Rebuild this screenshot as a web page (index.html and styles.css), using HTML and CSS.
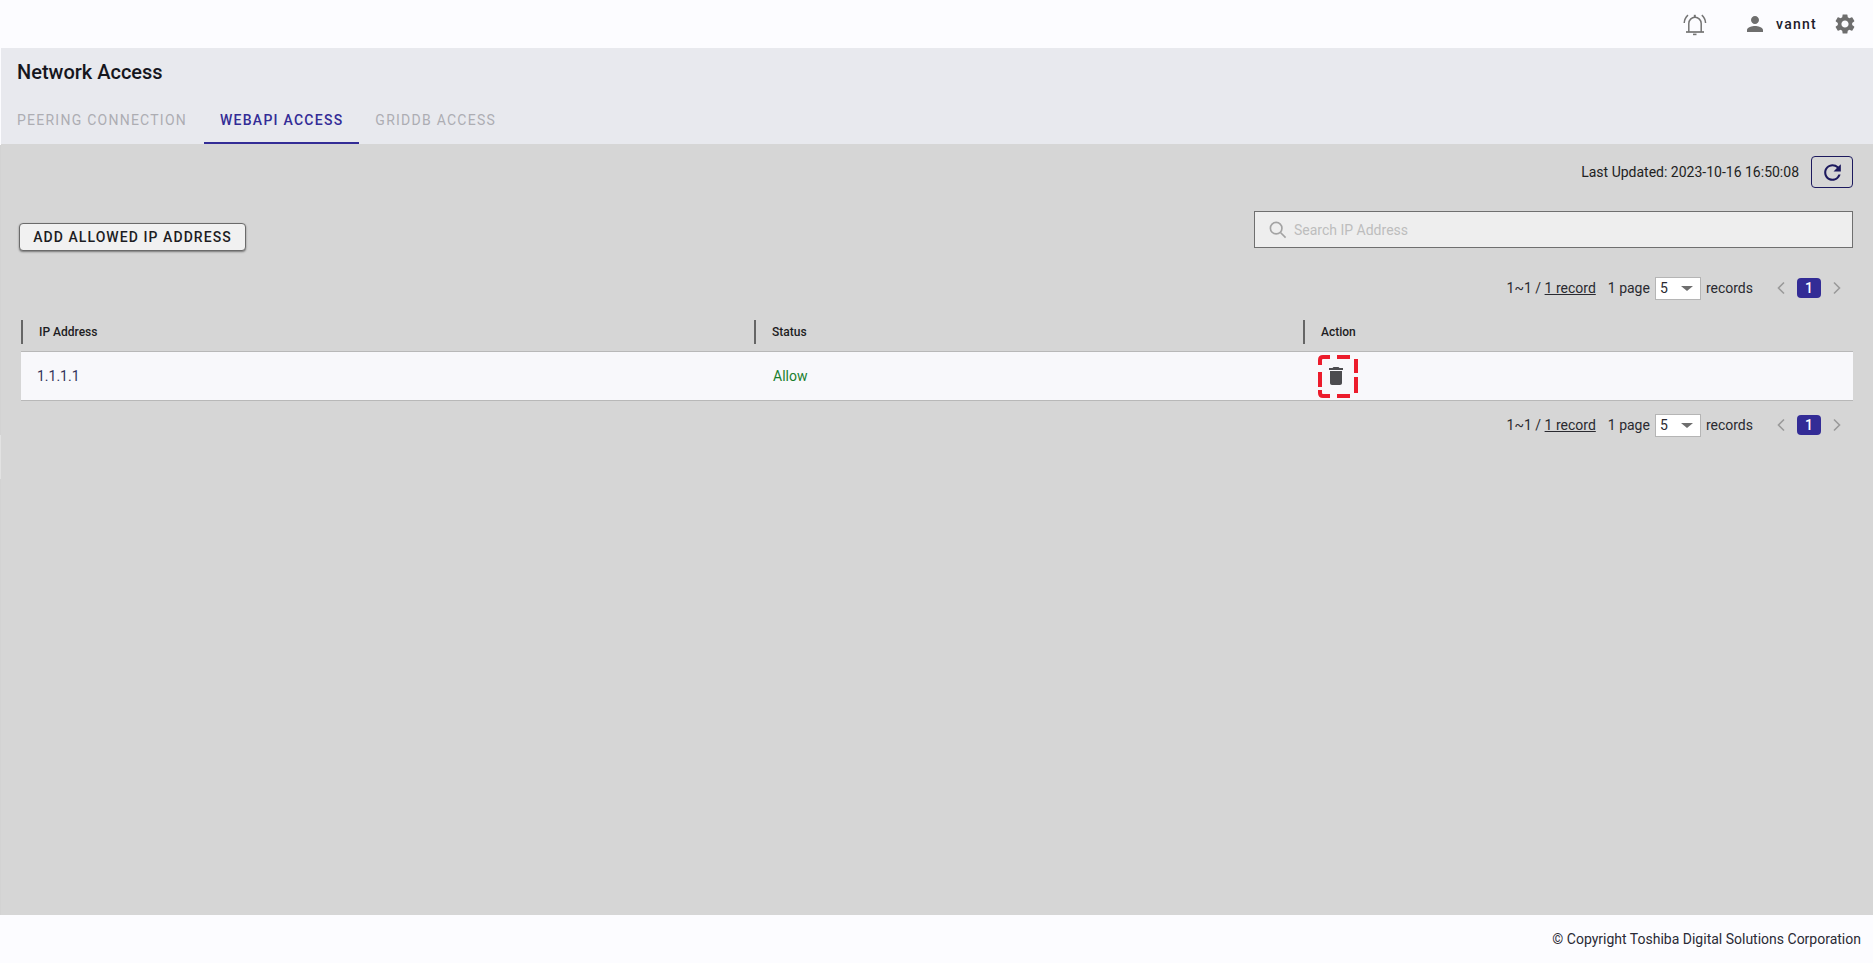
FILE: index.html
```html
<!DOCTYPE html>
<html lang="en">
<head>
<meta charset="utf-8">
<title>Network Access</title>
<link rel="stylesheet" href="styles.css">
</head>
<body>
<div class="app">
  <header class="topbar">
    <svg class="bell" viewBox="0 0 24 24" width="24" height="24" fill="none" stroke="#747474" stroke-width="1.500"><path d="M3 20h18" stroke-width="1.700"/><path d="M5.800 20v-8.500a6.200 6.200 0 0 1 12.400 0V20"/><path d="M10 22.400h3.500" stroke-width="1.600"/><path d="M11.800 2.800v2.400" stroke-width="2"/><path d="M1.200 11C1.400 8 2.600 5.200 5 3.200M22.600 11c-.2-3-1.400-5.800-3.800-7.800"/></svg>
    <svg class="user" viewBox="0 0 24 24" width="24" height="24" fill="#6e6e6e"><path d="M12 12c2.200 0 4-1.800 4-4s-1.800-4-4-4-4 1.800-4 4 1.800 4 4 4zm0 2c-2.700 0-8 1.300-8 4v2h16v-2c0-2.700-5.300-4-8-4z"/></svg>
    <span class="username">vannt</span>
    <svg class="gear" viewBox="0 0 24 24" width="24" height="24" fill="#6e6e6e"><path d="M19.140 12.940c.04-.3.060-.61.060-.94 0-.32-.02-.64-.07-.94l2.030-1.580a.49.49 0 0 0 .12-.61l-1.920-3.320a.488.488 0 0 0-.59-.22l-2.390.96c-.5-.38-1.030-.7-1.620-.94l-.36-2.540a.484.484 0 0 0-.48-.41h-3.840c-.24 0-.43.170-.47.410l-.36 2.540c-.59.24-1.130.57-1.620.94l-2.390-.96c-.22-.08-.47 0-.59.220L2.740 8.870c-.12.210-.08.470.120.610l2.030 1.580c-.05.300-.09.630-.09.940s.02.640.07.940l-2.030 1.580a.49.49 0 0 0-.12.610l1.920 3.320c.12.220.37.290.59.220l2.390-.96c.5.380 1.030.7 1.620.94l.36 2.540c.05.240.24.410.48.410h3.840c.24 0 .44-.170.47-.410l.36-2.540c.59-.24 1.130-.56 1.620-.94l2.390.96c.22.080.47 0 .59-.220l1.920-3.320c.12-.22.070-.47-.12-.61l-2.010-1.580zM12 15.600c-1.980 0-3.600-1.620-3.600-3.600s1.620-3.600 3.600-3.600 3.600 1.620 3.600 3.600-1.620 3.600-3.600 3.600z"/></svg>
  </header>

  <section class="page-head">
    <h1 class="page-title">Network Access</h1>
    <nav class="tabs">
      <a class="tab tab-first">PEERING CONNECTION</a>
      <a class="tab tab-active">WEBAPI ACCESS</a>
      <a class="tab">GRIDDB ACCESS</a>
    </nav>
  </section>

  <main class="content">
    <div class="update-row">
      <span class="updated">Last Updated: 2023-10-16 16:50:08</span>
      <button class="refresh" type="button" aria-label="Refresh">
        <svg viewBox="0 0 24 24" width="25" height="25" fill="#1d1a5e"><path d="M17.650 6.350A7.958 7.958 0 0 0 12 4c-4.420 0-7.990 3.580-7.990 8s3.570 8 7.990 8c3.730 0 6.840-2.550 7.730-6h-2.080A5.990 5.990 0 0 1 12 18c-3.310 0-6-2.690-6-6s2.690-6 6-6c1.660 0 3.140.69 4.220 1.780L13 11h7V4l-2.350 2.350z"/></svg>
      </button>
    </div>

    <div class="action-row">
      <button class="add-btn" type="button">ADD ALLOWED IP ADDRESS</button>
      <label class="search">
        <svg viewBox="0 0 24 24" width="22" height="22" fill="none" stroke="#a3a3a3" stroke-width="1.800"><circle cx="10" cy="10" r="6.300"/><path d="M14.700 14.700l5.600 5.600"/></svg>
        <span class="placeholder">Search IP Address</span>
      </label>
    </div>

    <div class="pager pager-top">
      <span>1~1 / <u>1 record</u></span>
      <span class="per-page">1 page</span>
      <span class="select">5<i class="caret"></i></span>
      <span>records</span>
      <svg class="chev" viewBox="0 0 10 14" width="10" height="14" fill="none" stroke="#9a9a9a" stroke-width="1.600"><path d="M8 1.500L2.500 7 8 12.500"/></svg>
      <span class="page-num">1</span>
      <svg class="chev" viewBox="0 0 10 14" width="10" height="14" fill="none" stroke="#9a9a9a" stroke-width="1.600"><path d="M2 1.500L7.500 7 2 12.500"/></svg>
    </div>

    <div class="table">
      <div class="thead">
        <div class="th col-ip">IP Address</div>
        <div class="th col-status">Status</div>
        <div class="th col-action">Action</div>
      </div>
      <div class="trow">
        <div class="td col-ip ip-val">1.1.1.1</div>
        <div class="td col-status allow">Allow</div>
        <div class="td col-action">
          <span class="del-wrap">
            <svg viewBox="0 0 24 24" width="24" height="24" fill="#4c4c4f"><path d="M6 19c0 1.100.9 2 2 2h8c1.100 0 2-.9 2-2V7H6v12zM19 4h-3.500l-1-1h-5l-1 1H5v2h14V4z"/></svg>
            <svg class="del-mark" viewBox="0 0 40 43" width="40" height="43" fill="none" stroke="#ec1c2c" stroke-width="4"><path d="M2 10V5Q2 2 5 2H12M19 2H32M38 4V18M38 22V38M32 41H19M12 41H5Q2 41 2 38V35M2 32V17"/></svg>
          </span>
        </div>
      </div>
    </div>

    <div class="pager pager-bottom">
      <span>1~1 / <u>1 record</u></span>
      <span class="per-page">1 page</span>
      <span class="select">5<i class="caret"></i></span>
      <span>records</span>
      <svg class="chev" viewBox="0 0 10 14" width="10" height="14" fill="none" stroke="#9a9a9a" stroke-width="1.600"><path d="M8 1.500L2.500 7 8 12.500"/></svg>
      <span class="page-num">1</span>
      <svg class="chev" viewBox="0 0 10 14" width="10" height="14" fill="none" stroke="#9a9a9a" stroke-width="1.600"><path d="M2 1.500L7.500 7 2 12.500"/></svg>
    </div>
  </main>

  <footer class="footer">© Copyright Toshiba Digital Solutions Corporation</footer>
</div>
</body>
</html>
```
FILE: styles.css
```css
* { box-sizing: border-box; }
html, body { margin: 0; height: 100%; }
body { font-family: Roboto, "Liberation Sans", sans-serif; color: #222; background: #fcfcff; overflow: hidden; }
.app { display: flex; flex-direction: column; height: 963px; }

.topbar { height: 48px; background: #fcfcff; display: flex; align-items: center; justify-content: flex-end; padding-right: 16px; flex: none; }
.bell { margin-right: 36px; }
.user { margin-right: 9px; }
.username { font-size: 14px; font-weight: 500; letter-spacing: 1.250px; color: #1d1d2b; margin-right: 16px; }

.page-head { height: 97px; background: #e8e9ee; margin-left: 1px; flex: none; display: flex; flex-direction: column; border-bottom: 1px solid #d6d6d6; }
.page-title { margin: 9px 0 0 16px; font-size: 20px; line-height: 30px; font-weight: 500; color: #16161d; }
.tabs { display: flex; margin-top: auto; }
.tab { padding: 2px 16px 0; height: 48px; display: flex; align-items: center; font-size: 14px; font-weight: 400; letter-spacing: 1.250px; color: #adadb3; border-bottom: 2px solid transparent; }
.tab-first { padding-right: 17px; }
.tab-active { color: #332c96; font-weight: 500; border-bottom-color: #332c96; }

.content { position: relative; flex: 1; background: #d6d6d6; border-left: 1px solid #d3d3d3; padding: 11px 20px 0 18px; display: flex; flex-direction: column; }
.content::before { content: ""; position: absolute; left: -1px; top: 290px; width: 1px; height: 44px; background: #e2e2e2; }

.update-row { display: flex; justify-content: flex-end; align-items: center; height: 32px; }
.updated { font-size: 14px; color: #222; margin-right: 12px; }
.refresh { width: 42px; height: 32px; border: 1px solid #1d1a5e; border-radius: 4px; background: transparent; padding: 0; display: flex; align-items: center; justify-content: center; }

.action-row { display: flex; justify-content: space-between; align-items: flex-start; margin-top: 23px; height: 37px; }
.add-btn { margin-top: 12px; width: 227px; height: 28px; border: 1px solid #6b6b6b; border-radius: 4px; background: #f1f1f1; box-shadow: 0 1px 2px rgba(0,0,0,.45); font-family: inherit; font-size: 14px; font-weight: 500; letter-spacing: 1.070px; color: #1d1d23; padding: 0; }
.search { width: 599px; height: 37px; border: 1px solid #6f6f6f; background: #eeeeee; display: flex; align-items: center; padding-left: 12px; }
.placeholder { font-size: 14px; color: #bdbdbd; margin-left: 5px; }

.pager { display: flex; justify-content: flex-end; align-items: center; font-size: 14px; color: #2a2a30; height: 24px; padding-right: 11px; }
.pager-top { margin-top: 28px; }
.pager-bottom { margin-top: 12px; }
.per-page { margin-left: 12px; }
.select { margin: 0 5px; width: 46px; height: 23px; background: #fff; border: 1px solid #b5b5b5; display: flex; align-items: center; justify-content: space-between; padding: 0 11px 0 4px; }
.caret { width: 0; height: 0; border-left: 6px solid transparent; border-right: 6px solid transparent; border-top: 5px solid #6e6e6e; margin-right: -4px; }
.chev { margin-left: 23px; }
.chev + .page-num { margin-left: 11px; }
.page-num + .chev { margin-left: 11px; }
.page-num { width: 24px; height: 20px; border-radius: 4px; background: #332c96; color: #fff; font-weight: 500; display: flex; align-items: center; justify-content: center; }

.table { margin-top: 20px; margin-left: 2px; }
.thead { display: flex; height: 31px; align-items: flex-start; }
.th { height: 24px; border-left: 2px solid #666; font-size: 12px; font-weight: 500; color: #1d1d23; display: flex; align-items: center; padding-left: 16px; }
.col-ip { width: 733px; }
.col-status { width: 549px; }
.col-action { flex: 1; }
.trow { display: flex; height: 50px; background: #f8f8fb; border-top: 1px solid #b8b8b8; border-bottom: 1px solid #b8b8b8; align-items: center; }
.td { font-size: 14px; }
.ip-val { padding-left: 16px; color: #33335a; }
.allow { padding-left: 19px; color: #1a7f2e; }
.trow .col-action { padding-left: 15px; display: flex; }
.del-wrap { position: relative; width: 40px; height: 43px; padding-right: 4px; display: flex; align-items: center; justify-content: center; }
.del-mark { position: absolute; left: 0; top: 0; }

.footer { height: 48px; flex: none; background: #fcfcff; display: flex; align-items: center; justify-content: flex-end; padding-right: 12px; font-size: 14px; color: #2a2a35; }
```
